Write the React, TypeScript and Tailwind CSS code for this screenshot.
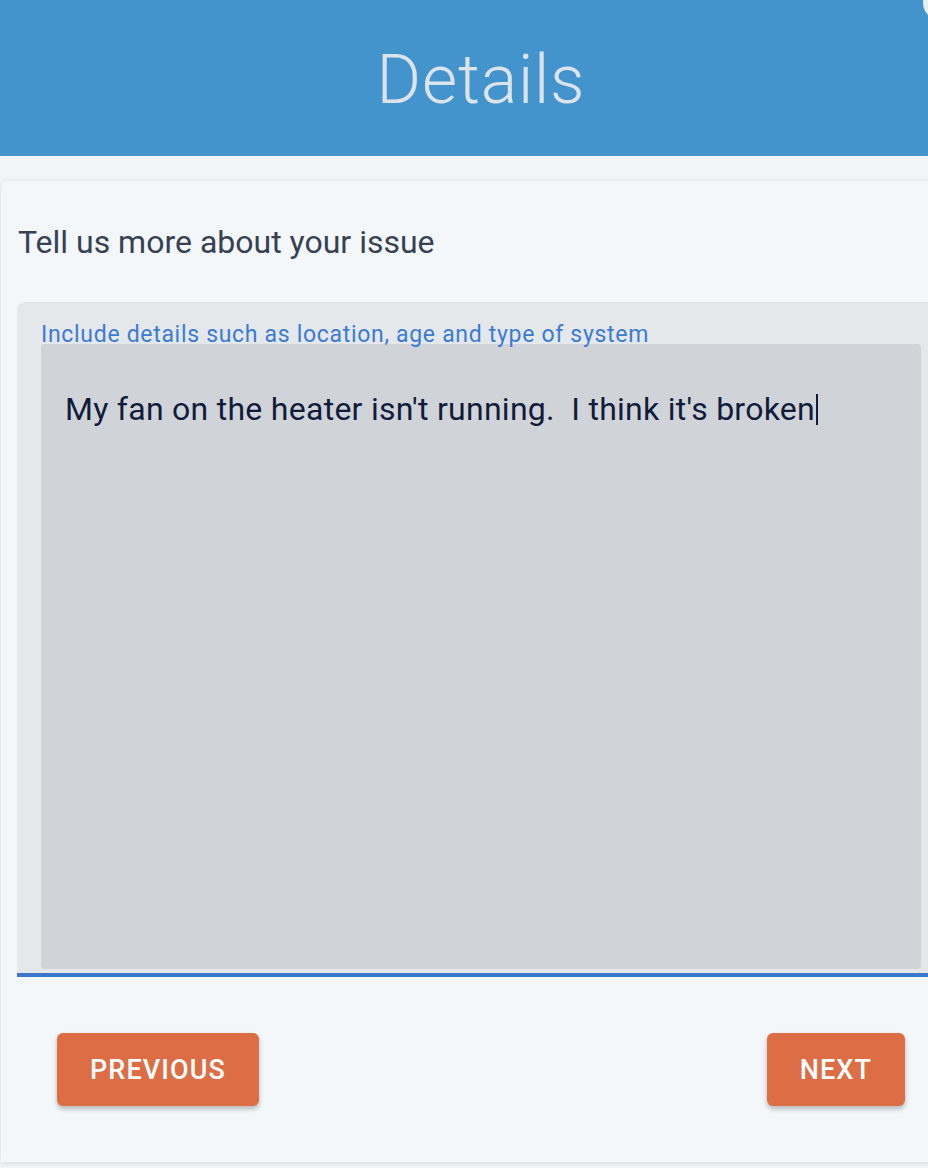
import React from "react";

export default function App() {
  return (
    <div
      className="w-[928px] h-[1168px] overflow-hidden bg-[#eef1f4] relative"
      style={{ fontFamily: "Roboto, 'Noto Sans', sans-serif" }}
    >
      <div className="w-[962px] bg-[#f3f6f9]">
        <header className="relative h-[156px] bg-[#4393cd] flex items-center justify-center">
          <h1 className="text-[68px] font-light text-[#dde3ea] leading-none mt-[4px] tracking-[0.012em]">Details</h1>
          <div className="absolute left-[923px] top-[-14px] w-[34px] h-[34px] rounded-full bg-[#e6edf3]" />
        </header>
        <div className="h-[25px]" />
        <div className="mx-[1px] bg-[#f3f7fa] shadow-[0_1px_6px_rgba(0,0,0,0.12)] px-[16px] pt-[41px] pb-[56px]">
          <p className="text-[32px] leading-[40px] text-[#364152] pl-[1px]">Tell us more about your issue</p>
          <div className="mt-[40px] relative bg-[#e5e8eb] rounded-t-[8px] px-[24px] pt-[42px] pb-[4px] border-b-[4px] border-[#3a77cd]">
            <label className="absolute left-[24px] top-[20px] text-[23px] leading-[26px] tracking-[0.03em] text-[#3b7bd4]">
              Include details such as location, age and type of system
            </label>
            <div className="h-[625px] bg-[#d0d4d8] rounded-[4px] px-[24px] pt-[41px]">
              <div className="text-[32px] leading-[48px] tracking-[0.0085em] text-[#111c3b] whitespace-pre flex items-center">
                <span>My fan on the heater isn't running.  I think it's broken</span>
                <span className="inline-block w-[2px] h-[31px] bg-[#111c3b] ml-[1px]" />
              </div>
            </div>
          </div>
          <div className="flex justify-between px-[40px] mt-[56px]">
            <button className="h-[73px] px-[33px] rounded-[6px] bg-[#dc6d45] text-white text-[27px] font-medium tracking-[0.04em] pt-[2px] shadow-[0_3px_5px_rgba(0,0,0,0.25)]">
              PREVIOUS
            </button>
            <button className="h-[73px] px-[33px] rounded-[6px] bg-[#dc6d45] text-white text-[27px] font-medium tracking-[0.04em] pt-[2px] shadow-[0_3px_5px_rgba(0,0,0,0.25)]">
              NEXT
            </button>
          </div>
        </div>
        <div className="h-[20px]" />
      </div>
    </div>
  );
}
